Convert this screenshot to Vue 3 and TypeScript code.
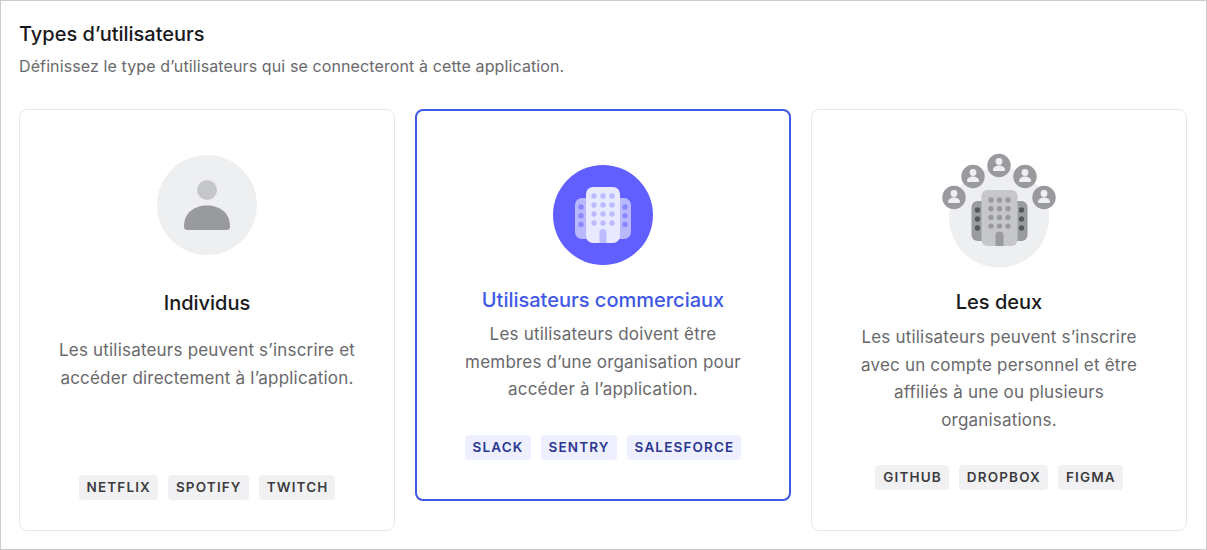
<script setup lang="ts">
interface Option {
  key: string
  title: string
  lines: string[]
  tags: string[]
}

const options: Option[] = [
  { key: 'solo', title: 'Individus', lines: ['Les utilisateurs peuvent s’inscrire et', 'accéder directement à l’application.'], tags: ['NETFLIX', 'SPOTIFY', 'TWITCH'] },
  { key: 'biz', title: 'Utilisateurs commerciaux', lines: ['Les utilisateurs doivent être', 'membres d’une organisation pour', 'accéder à l’application.'], tags: ['SLACK', 'SENTRY', 'SALESFORCE'] },
  { key: 'both', title: 'Les deux', lines: ['Les utilisateurs peuvent s’inscrire', 'avec un compte personnel et être', 'affiliés à une ou plusieurs', 'organisations.'], tags: ['GITHUB', 'DROPBOX', 'FIGMA'] },
]

const peers = [
  { x: 17, y: 44.5 },
  { x: 36, y: 23.5 },
  { x: 62, y: 12.5 },
  { x: 88, y: 23.5 },
  { x: 107, y: 44.5 },
]
const rows = [0, 1, 2, 3]
const cols = [0, 1, 2]
const sideRows = [0, 1, 2]
</script>

<template>
  <div class="panel">
    <h1 class="heading">Types d’utilisateurs</h1>
    <p class="sub">Définissez le type d’utilisateurs qui se connecteront à cette application.</p>
    <div class="cards">
      <section v-for="o in options" :key="o.key" class="card" :class="'card-' + o.key">
        <svg v-if="o.key === 'solo'" class="icon" width="100" height="100" viewBox="0 0 100 100">
          <circle cx="50" cy="50" r="50" fill="#eeeff1" />
          <circle cx="50" cy="35" r="10" fill="#c6c7ca" />
          <path d="M27 71.5C27 58 37 50.500 50 50.500S73 58 73 71.500Q73 75 69.500 75H30.500Q27 75 27 71.500Z" fill="#999a9e" />
        </svg>

        <svg v-else-if="o.key === 'biz'" class="icon" width="100" height="100" viewBox="0 0 100 100">
          <circle cx="50" cy="50" r="50" fill="#615fff" />
          <rect x="22" y="33" width="56" height="41" rx="7" fill="#b9b8ff" />
          <rect x="33" y="22" width="34" height="56" rx="7" fill="#e8e8ff" />
          <template v-for="r in rows" :key="r">
            <circle v-for="c in cols" :key="c" :cx="41 + c * 9" :cy="31 + r * 9" r="2.700" fill="#bcbbff" />
          </template>
          <template v-for="r in sideRows" :key="r">
            <circle cx="28" :cy="42 + r * 8.700" r="2.700" fill="#8987ff" />
            <circle cx="72" :cy="42 + r * 8.700" r="2.700" fill="#8987ff" />
          </template>
          <path d="M46.500 78V67.500a3.500 3.500 0 0 1 7 0V78Z" fill="#bcbbff" />
        </svg>

        <svg v-else class="icon" width="125" height="116" viewBox="0 0 125 116">
          <circle cx="62" cy="64.500" r="50" fill="#eeeff1" />
          <rect x="34.500" y="48" width="56" height="40" rx="6" fill="#9a9b9e" />
          <rect x="44.500" y="37" width="36" height="56" rx="6" fill="#c6c7ca" />
          <template v-for="r in rows" :key="r">
            <circle v-for="c in cols" :key="c" :cx="54 + c * 8.500" :cy="47 + r * 8.700" r="2.700" fill="#999a9e" />
          </template>
          <template v-for="r in sideRows" :key="r">
            <circle cx="40.500" :cy="57 + r * 9" r="2.700" fill="#56575a" />
            <circle cx="84.500" :cy="57 + r * 9" r="2.700" fill="#56575a" />
          </template>
          <path d="M58.500 93V82.500a4 4 0 0 1 8 0V93Z" fill="#9a9b9e" />
          <g v-for="p in peers" :key="p.x" :transform="`translate(${p.x} ${p.y})`">
            <circle r="11.700" fill="#999a9e" />
            <circle cy="-4" r="3.400" fill="#eeeff1" />
            <path d="M-6 4.500C-6 1.500-3 0 0 0S6 1.500 6 4.500Q6 5.500 5 5.500H-5Q-6 5.500-6 4.500Z" fill="#eeeff1" />
          </g>
        </svg>

        <h2 class="title">{{ o.title }}</h2>
        <p class="desc"><span v-for="l in o.lines" :key="l" class="line">{{ l }}</span></p>
        <div class="tags"><span v-for="t in o.tags" :key="t" class="tag">{{ t }}</span></div>
      </section>
    </div>
  </div>
</template>

<style>
html, body { margin: 0; background: #fff; }
</style>

<style scoped>
.panel {
  box-sizing: border-box;
  width: 1207px;
  height: 550px;
  border: 1px solid #cccccc;
  padding: 20px 19px 0 18px;
  font-family: Inter, "Liberation Sans", sans-serif;
  background: #fff;
}
.heading {
  margin: 0;
  font-size: 20px;
  line-height: 26px;
  font-weight: 450;
  color: #19191c;
}
.sub {
  margin: 7px 0 0;
  font-size: 16px;
  line-height: 24px;
  letter-spacing: 0.11px;
  color: #69696c;
}
.cards {
  display: grid;
  grid-template-columns: repeat(3, 376px);
  column-gap: 20px;
  align-items: start;
  margin-top: 31px;
}
.card {
  box-sizing: border-box;
  display: flex;
  flex-direction: column;
  align-items: center;
  height: 422px;
  border: 1px solid #e6e7ea;
  border-radius: 8px;
  text-align: center;
}
.card-solo { padding-top: 45px; }
.card-biz {
  height: 392px;
  padding-top: 54px;
  border: 2px solid #4059e5;
}
.card-both { padding-top: 43px; }
.icon { display: block; flex: none; }
.title {
  margin: 34px 0 0;
  font-size: 20px;
  line-height: 28px;
  font-weight: 450;
  color: #19191c;
}
.card-biz .title { margin-top: 21px; color: #4059e5; }
.card-both .title { margin-top: 19px; }
.desc {
  margin: 20px 0 0;
  font-size: 17px;
  line-height: 27.700px;
  letter-spacing: 0.2px;
  color: #69696c;
}
.card-biz .desc { margin-top: 7px; }
.card-both .desc { margin-top: 8px; }
.line { display: block; }
.tags {
  display: flex;
  gap: 10px;
  margin-top: auto;
  margin-bottom: 30px;
}
.card-biz .tags { margin-bottom: 39px; }
.card-both .tags { margin-bottom: 40px; }
.tag {
  padding: 0 7px 0 8px;
  height: 25px;
  line-height: 25px;
  border-radius: 4px;
  font-size: 13.500px;
  font-weight: 600;
  letter-spacing: 1.150px;
  background: #f1f1f3;
  color: #3c3c3f;
}
.card-biz .tag { background: #eeefff; color: #2b3790; }
</style>
